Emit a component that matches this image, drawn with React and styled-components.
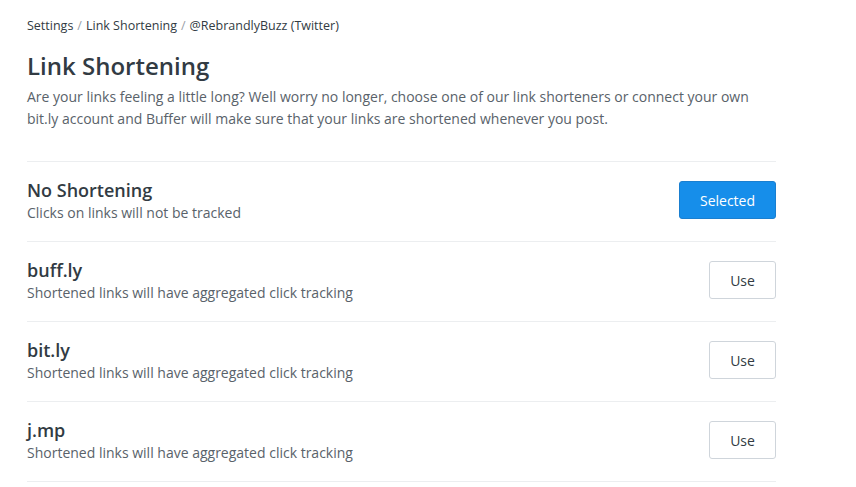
import React from 'react';
import styled, { createGlobalStyle } from 'styled-components';

const GlobalStyle = createGlobalStyle`
  body {
    margin: 0;
    background: #ffffff;
    font-family: "Open Sans", "Liberation Sans", sans-serif;
    color: #323b43;
  }
`;

const Page = styled.main`
  width: 749px;
  padding: 16px 0 0 27px;
`;

const Breadcrumb = styled.nav`
  font-size: 12.5px;
  line-height: 20px;
  color: #323b43;
`;

const Sep = styled.span`
  color: #9aa1a8;
  margin: 0 4px;
`;

const Title = styled.h1`
  margin: 13px 0 0;
  font-size: 24px;
  font-weight: 600;
  line-height: 34px;
  color: #323b43;
`;

const Intro = styled.p`
  margin: 3px 0 0;
  font-size: 14px;
  line-height: 22px;
  color: #59626a;
`;

const List = styled.ul`
  list-style: none;
  margin: 31px 0 0;
  padding: 0;
  border-top: 1px solid #eceef0;
`;

const Row = styled.li`
  display: flex;
  align-items: center;
  justify-content: space-between;
  height: 79px;
  border-bottom: 1px solid #eceef0;
`;

const Info = styled.div`
  display: flex;
  flex-direction: column;
`;

const Name = styled.span`
  font-size: 18px;
  font-weight: 600;
  line-height: 22px;
  color: #323b43;
`;

const Desc = styled.span`
  margin-top: 1px;
  font-size: 14px;
  line-height: 22px;
  color: #59626a;
`;

const Button = styled.button`
  box-sizing: border-box;
  height: 38px;
  width: ${({ $selected }) => ($selected ? '97px' : '67px')};
  margin-bottom: 3px;
  padding: 0;
  border-radius: 3px;
  font-family: inherit;
  font-size: 14px;
  cursor: pointer;
  border: 1px solid ${({ $selected }) => ($selected ? '#1a7fd0' : '#cfd5db')};
  background: ${({ $selected }) => ($selected ? '#168eea' : '#ffffff')};
  color: ${({ $selected }) => ($selected ? '#ffffff' : '#323b43')};
`;

const shorteners = [
  { name: 'No Shortening', desc: 'Clicks on links will not be tracked', selected: true },
  { name: 'buff.ly', desc: 'Shortened links will have aggregated click tracking' },
  { name: 'bit.ly', desc: 'Shortened links will have aggregated click tracking' },
  { name: 'j.mp', desc: 'Shortened links will have aggregated click tracking' },
];

const App = () => (
  <>
    <GlobalStyle />
    <Page>
      <Breadcrumb>
        Settings<Sep>/</Sep>Link Shortening<Sep>/</Sep>@RebrandlyBuzz (Twitter)
      </Breadcrumb>
      <Title>Link Shortening</Title>
      <Intro>
        Are your links feeling a little long? Well worry no longer, choose one of our link shorteners or connect your own
        bit.ly account and Buffer will make sure that your links are shortened whenever you post.
      </Intro>
      <List>
        {shorteners.map((s) => (
          <Row key={s.name}>
            <Info>
              <Name>{s.name}</Name>
              <Desc>{s.desc}</Desc>
            </Info>
            <Button $selected={s.selected}>{s.selected ? 'Selected' : 'Use'}</Button>
          </Row>
        ))}
      </List>
    </Page>
  </>
);

export default App;
